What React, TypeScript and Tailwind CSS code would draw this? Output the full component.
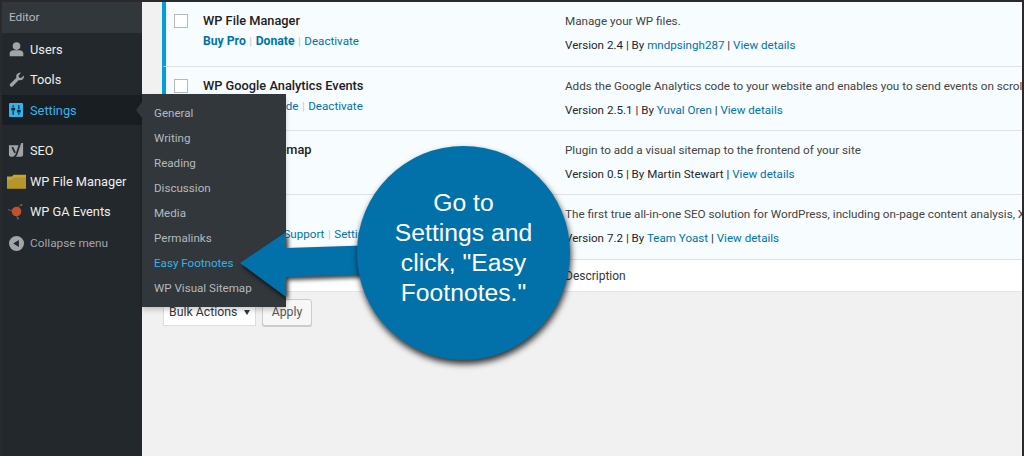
import React from "react";

type Plugin = {
  name: string;
  actions: React.ReactNode;
  description: string;
  version: string;
  author: string;
  authorLink: boolean;
  height: string;
};

const BODY_FONT = "font-['Roboto','Noto_Sans',sans-serif]";

const PLUGINS: Plugin[] = [
  {
    name: "WP File Manager",
    actions: (
      <>
        <b className="text-[12.2px] font-bold">Buy Pro</b>
        <Sep />
        <b className="text-[12.2px] font-bold">Donate</b>
        <Sep />
        Deactivate
      </>
    ),
    description: "Manage your WP files.",
    version: "2.4",
    author: "mndpsingh287",
    authorLink: true,
    height: "h-[65px]",
  },
  {
    name: "WP Google Analytics Events",
    actions: (
      <>
        Settings
        <Sep />
        Upgrade
        <Sep />
        Deactivate
      </>
    ),
    description:
      "Adds the Google Analytics code to your website and enables you to send events on scroll or click.",
    version: "2.5.1",
    author: "Yuval Oren",
    authorLink: true,
    height: "h-[64px]",
  },
  {
    name: "WP Visual Sitemap",
    actions: <>Deactivate</>,
    description: "Plugin to add a visual sitemap to the frontend of your site",
    version: "0.5",
    author: "Martin Stewart",
    authorLink: false,
    height: "h-[64px]",
  },
  {
    name: "Yoast SEO",
    actions: (
      <>
        FAQ
        <Sep />
        Premium Support
        <Sep />
        Settings
        <Sep />
        Deactivate
      </>
    ),
    description:
      "The first true all-in-one SEO solution for WordPress, including on-page content analysis, XML sitemaps and much more.",
    version: "7.2",
    author: "Team Yoast",
    authorLink: true,
    height: "h-[65px]",
  },
];

const SUBMENU = [
  "General",
  "Writing",
  "Reading",
  "Discussion",
  "Media",
  "Permalinks",
  "Easy Footnotes",
  "WP Visual Sitemap",
];

function Sep() {
  return <span className="mx-[3.5px] font-normal text-[#c5c9cc]">|</span>;
}

function UsersIcon() {
  return (
    <svg width="17" height="17" viewBox="0 0 20 20" fill="#a0a5aa">
      <circle cx="10" cy="6" r="4.500" />
      <path d="M2 18v-3.700c0-1.900 2.400-3.300 4.600-3.300h6.800c2.200 0 4.600 1.400 4.600 3.300V18z" />
    </svg>
  );
}

function ToolsIcon() {
  return (
    <svg width="17" height="17" viewBox="0 0 20 20" fill="#a0a5aa">
      <path d="M18.600 5.300c.4 2-.2 3.600-1.500 4.700-1.300 1-2.900 1.200-4.400.7l-7.200 7.200c-.8.8-2.100.8-2.800 0-.8-.8-.8-2 0-2.800l7.200-7.200c-.5-1.500-.2-3.200.9-4.400 1.200-1.300 2.900-1.700 4.600-1.300l-3 3 .6 2.400 2.400.6z" />
    </svg>
  );
}

function SettingsIcon() {
  return (
    <svg width="14" height="14" viewBox="0 0 15 15">
      <rect width="15" height="15" rx="1" fill="#33b3eb" />
      <path
        d="M4.500 2.500v1.800M4.500 8.500v4M10.500 2.500v4M10.500 10.500v2"
        stroke="#1b2a36"
        strokeWidth="1.400"
      />
      <path d="M2.500 5h4v3h-4zM8.500 7.200h4v3h-4z" fill="#1b2a36" />
    </svg>
  );
}

function YoastIcon() {
  return (
    <svg width="17" height="17" viewBox="0 0 18 18">
      <path d="M1 3.500h10.500l3-2.500h1.500v12.500c0 1-.8 2-2 2H3c-1.100 0-2-.9-2-2z" fill="#9ea3a8" />
      <path
        d="M4.500 5.500l3 6M12.800 1.500L9 13c-.5 1.500-1.400 2.500-3 3"
        stroke="#23282d"
        strokeWidth="1.900"
        fill="none"
      />
    </svg>
  );
}

function FolderIcon() {
  return (
    <svg width="19" height="15" viewBox="0 0 19 15">
      <path d="M0 2.500h5l1.500-1.800h12.500V14.500H0z" fill="#c8a52f" />
      <path d="M0 6.500C4 6 6 4.500 8 3.500h11V14.500H0z" fill="#b6962c" />
    </svg>
  );
}

function GaIcon() {
  return (
    <svg width="18" height="18" viewBox="0 0 18 18">
      <path d="M1 7.500l6 2M14 2.500l-5 5M9.500 12l1 5" stroke="#7b5a48" strokeWidth="1" />
      <circle cx="9.500" cy="9.500" r="4.800" fill="#c2502b" />
      <circle cx="14.500" cy="3" r="1" fill="#c2502b" />
      <circle cx="11" cy="16.500" r="1" fill="#3e7a8c" />
    </svg>
  );
}

function CollapseIcon() {
  return (
    <svg width="15" height="15" viewBox="0 0 16 16">
      <circle cx="8" cy="8" r="8" fill="#a0a5aa" />
      <path d="M10.500 4.300v7.400L4.500 8z" fill="#23282d" />
    </svg>
  );
}

function MenuRow({
  icon,
  label,
  className,
  labelClass,
}: {
  icon: React.ReactNode;
  label: string;
  className: string;
  labelClass?: string;
}) {
  return (
    <div className={`flex items-center ${className}`}>
      <span className="flex w-[28px] shrink-0 items-center justify-center">{icon}</span>
      <span className={`pt-px ${labelClass ?? "text-[12.8px] text-[#eee]"}`}>{label}</span>
    </div>
  );
}

function Sidebar() {
  return (
    <aside className="flex w-[140px] shrink-0 flex-col bg-[#23282d]">
      <div className="flex h-[31px] items-center bg-[#32373c] pl-[7px] text-[11.8px] text-[#b4b9be]">
        Editor
      </div>
      <div className="h-px" />
      <MenuRow icon={<UsersIcon />} label="Users" className="h-[30px]" />
      <MenuRow icon={<ToolsIcon />} label="Tools" className="h-[31px]" />
      <MenuRow
        icon={<SettingsIcon />}
        label="Settings"
        className="h-[30px] bg-[#191e23]"
        labelClass="text-[12.8px] text-[#33b3eb]"
      />
      <div className="h-[10px]" />
      <MenuRow icon={<YoastIcon />} label="SEO" className="h-[31px]" />
      <MenuRow icon={<FolderIcon />} label="WP File Manager" className="h-[30px]" />
      <MenuRow icon={<GaIcon />} label="WP GA Events" className="h-[30px]" />
      <MenuRow
        icon={<CollapseIcon />}
        label="Collapse menu"
        className="mt-[2px] h-[31px]"
        labelClass="text-[11.8px] text-[#a0a5aa]"
      />
    </aside>
  );
}

function PluginRow({ plugin }: { plugin: Plugin }) {
  return (
    <div
      className={`grid grid-cols-[37px_362px_1fr] overflow-hidden whitespace-nowrap border-b border-[#dfe2e5] border-l-4 border-l-[#00a0d2] bg-[#f7fcfe] ${plugin.height}`}
    >
      <div className="pl-[8px] pt-[12px]">
        <div className="h-[14px] w-[14px] border border-[#b4b9be] bg-white" />
      </div>
      <div>
        <div className="pt-[9px] text-[12.8px] font-medium leading-[20px] text-[#1d2125]">
          {plugin.name}
        </div>
        <div className="text-[11.6px] leading-[20px] text-[#0073aa]">{plugin.actions}</div>
      </div>
      <div>
        <div className="pt-[9px] text-[11.7px] leading-[20px] text-[#444]">{plugin.description}</div>
        <div className="pt-[4px] text-[11.6px] leading-[20px] text-[#23282d]">
          Version {plugin.version} | By{" "}
          <span className={plugin.authorLink ? "text-[#0073aa]" : ""}>{plugin.author}</span> |{" "}
          <span className="text-[#0073aa]">View details</span>
        </div>
      </div>
    </div>
  );
}

function Flyout() {
  return (
    <div className="absolute left-[140px] top-[92px] w-[144px] bg-[#32373c] pt-[7px] shadow-[0_3px_5px_rgba(0,0,0,0.2)]">
      <div className="absolute left-[-6px] top-[8px] h-0 w-0 border-y-[8px] border-r-[6px] border-y-transparent border-r-[#32373c]" />
      {SUBMENU.map((item) => (
        <div
          key={item}
          className={`flex h-[25px] items-center pl-[12px] text-[11.6px] ${
            item === "Easy Footnotes" ? "text-[#33b3eb]" : "text-[#b4b9be]"
          }`}
        >
          {item}
        </div>
      ))}
      <div className="h-[6px]" />
    </div>
  );
}

function Callout() {
  return (
    <>
      <svg
        className="absolute left-[228px] top-[223px] drop-shadow-[2px_3px_2px_rgba(0,0,0,0.75)]"
        width="150"
        height="80"
        viewBox="0 0 150 80"
      >
        <path d="M10 38L56 7V23L148 20V49L56 52V72z" fill="#0271a9" />
      </svg>
      <div className="absolute left-[355px] top-[144px] flex h-[214px] w-[213px] flex-col items-center rounded-full bg-[#0271a9] pt-[42px] text-center font-['Liberation_Sans',sans-serif] text-[24.7px] leading-[30px] text-white shadow-[1px_4px_6px_rgba(0,0,0,0.8)]">
        <span>Go to</span>
        <span>Settings and</span>
        <span>click, "Easy</span>
        <span>Footnotes."</span>
      </div>
    </>
  );
}

export default function App() {
  return (
    <div
      className={`relative flex h-[456px] w-[1024px] overflow-hidden border-y-2 border-l-2 border-r-2 border-b-0 border-[#2a2a2c] bg-[#f1f1f1] ${BODY_FONT}`}
    >
      <Sidebar />
      <main className="min-w-0 flex-1 pl-[20px]">
        {PLUGINS.map((plugin) => (
          <PluginRow key={plugin.name} plugin={plugin} />
        ))}
        <div className="grid h-[32px] grid-cols-[41px_362px_1fr] items-center border-b border-[#e5e5e5] bg-white text-[12px] text-[#32373c]">
          <span />
          <span>Plugin</span>
          <span>Description</span>
        </div>
        <div className="flex items-center gap-[6px] whitespace-nowrap pl-px pt-[7px] text-[12.3px] text-[#555]">
          <div className="flex h-[27px] w-[93px] items-center justify-between border border-[#ddd] bg-white pl-[5px] pr-[5px] text-[#32373c]">
            Bulk Actions
            <span className="h-0 w-0 border-x-[3px] border-t-[5px] border-x-transparent border-t-[#32373c]" />
          </div>
          <div className="flex h-[27px] w-[50px] items-center justify-center rounded-[3px] border border-[#ccc] bg-[#f7f7f7] shadow-[0_1px_0_#ccc]">
            Apply
          </div>
        </div>
      </main>
      <Flyout />
      <Callout />
    </div>
  );
}
